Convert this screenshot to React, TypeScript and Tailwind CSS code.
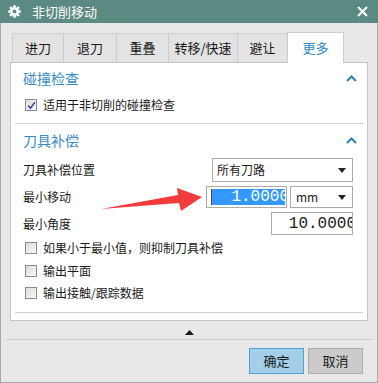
import React from "react";

function Checkbox({ checked }: { checked?: boolean }) {
  return (
    <div className="w-[12px] h-[12px] border border-[#8c8c8c] bg-gradient-to-br from-[#dedede] to-[#f7f7f7] flex items-center justify-center shrink-0">
      {checked && (
        <svg width="9" height="9" viewBox="0 0 9 9">
          <path d="M1.2 4.6 L3.5 7.2 L7.8 1.2" fill="none" stroke="#3b4f8f" strokeWidth="1.6" />
        </svg>
      )}
    </div>
  );
}

function Chevron() {
  return (
    <svg width="11" height="7" viewBox="0 0 11 7">
      <path d="M1 6 L5.5 1.5 L10 6" fill="none" stroke="#2f7fb9" strokeWidth="2" />
    </svg>
  );
}

function Caret() {
  return (
    <svg width="8" height="5" viewBox="0 0 8 5">
      <path d="M0 0 L8 0 L4 5 Z" fill="#222" />
    </svg>
  );
}

function CbRow({ label, checked }: { label: string; checked?: boolean }) {
  return (
    <div className="h-[22px] flex items-center pl-[14px] gap-[6px]">
      <Checkbox checked={checked} />
      <span className="text-[12px] text-[#1a1a1a] leading-none">{label}</span>
    </div>
  );
}

export default function App() {
  const tabs = [
    { t: "进刀", w: "w-[51px]" },
    { t: "退刀", w: "w-[53px]" },
    { t: "重叠", w: "w-[52px]" },
    { t: "转移/快速", w: "w-[69px]" },
    { t: "避让", w: "w-[50px]" },
  ];
  return (
    <div className="relative w-[378px] h-[383px] font-['Noto_Sans_CJK_SC',sans-serif] bg-[#e8e8e8] overflow-hidden select-none">
      {/* Title bar */}
      <div className="h-[23px] bg-[#5a8a82] flex items-center pl-[8px] pr-[10px]">
        <svg width="13" height="13" viewBox="0 0 13 13">
          <g fill="#ffffff">
            <circle cx="6.5" cy="6.5" r="4.3" />
            {[0, 45, 90, 135].map((a) => (
              <rect key={a} x="5.2" y="0.3" width="2.6" height="12.4" transform={`rotate(${a} 6.5 6.5)`} />
            ))}
          </g>
          <circle cx="6.5" cy="6.5" r="1.9" fill="#5a8a82" />
        </svg>
        <span className="ml-[11px] text-[13px] text-white leading-none">非切削移动</span>
        <div className="flex-1" />
        <svg width="11" height="11" viewBox="0 0 11 11">
          <path d="M1 1 L10 10 M10 1 L1 10" stroke="#ffffff" strokeWidth="2" />
        </svg>
      </div>

      {/* Body */}
      <div className="h-[360px] border-x border-b border-[#a9a9a9] flex flex-col">
        {/* Tabs */}
        <div className="h-[39px] flex items-end pl-[11px]">
          {tabs.map((tb) => (
            <div
              key={tb.t}
              className={`${tb.w} h-[29px] border-l border-t border-[#cdcdcd] bg-[#e3e3e3] flex items-center justify-center text-[13px] text-[#1a1a1a]`}
            >
              {tb.t}
            </div>
          ))}
          <div className="w-[57px] h-[31px] -mb-px relative z-10 border-l border-t border-r border-[#cdcdcd] bg-white flex items-center justify-center text-[13px] text-[#2d87c4]">
            更多
          </div>
        </div>

        {/* Panel */}
        <div className="mx-[9px] h-[259px] border border-[#c4c4c4] bg-white flex flex-col">
          {/* Section 1 */}
          <div className="mt-[3px] h-[24px] flex items-center justify-between pl-[12px] pr-[10px]">
            <span className="text-[14px] text-[#3a8cc6] leading-none">碰撞检查</span>
            <Chevron />
          </div>
          <div className="mt-[4px]">
            <CbRow label="适用于非切削的碰撞检查" checked />
          </div>
          <div className="mt-[7px] mx-[4px] h-px bg-[#cfcfcf]" />

          {/* Section 2 */}
          <div className="mt-[4px] h-[24px] flex items-center justify-between pl-[12px] pr-[10px]">
            <span className="text-[14px] text-[#3a8cc6] leading-none">刀具补偿</span>
            <Chevron />
          </div>

          <div className="mt-[6px] h-[24px] flex items-center justify-between pl-[12px] pr-[14px]">
            <span className="text-[12px] text-[#1a1a1a] leading-none">刀具补偿位置</span>
            <div className="w-[141px] h-[24px] border border-[#ababab] bg-white flex items-center justify-between pl-[4px] pr-[6px]">
              <span className="text-[12px] text-[#1a1a1a] leading-none">所有刀路</span>
              <Caret />
            </div>
          </div>

          <div className="mt-[4px] h-[22px] flex items-center justify-between pl-[12px] pr-[14px]">
            <span className="text-[12px] text-[#1a1a1a] leading-none">最小移动</span>
            <div className="flex items-center gap-[3px]">
              <div className="w-[81px] h-[22px] border border-[#ababab] bg-white flex items-center pl-[4px] pr-[1px]">
                <div className="flex-1 h-[16px] bg-[#3399ff] flex items-center justify-end overflow-hidden relative">
                  <div className="absolute left-0 top-0 w-px h-[16px] bg-[#6b4a2a]" />
                  <span className="font-['Liberation_Mono',monospace] text-[16px] text-white leading-none -mr-[4px]">1.0000</span>
                </div>
              </div>
              <div className="w-[63px] h-[22px] border border-[#ababab] bg-white flex items-center justify-between pl-[5px] pr-[6px]">
                <span className="text-[12px] text-[#1a1a1a] leading-none">mm</span>
                <Caret />
              </div>
            </div>
          </div>

          <div className="mt-[4px] h-[23px] flex items-center justify-between pl-[12px] pr-[14px]">
            <span className="text-[12px] text-[#1a1a1a] leading-none">最小角度</span>
            <div className="w-[82px] h-[23px] border border-[#ababab] bg-white flex items-center justify-end overflow-hidden">
              <span className="font-['Liberation_Mono',monospace] text-[16px] text-[#1a1a1a] leading-none -mr-[4px]">10.0000</span>
            </div>
          </div>

          <div className="mt-[2px]">
            <CbRow label="如果小于最小值，则抑制刀具补偿" />
          </div>
          <div className="mt-[1px]">
            <CbRow label="输出平面" />
          </div>
          <CbRow label="输出接触/跟踪数据" />
          <div className="mt-[8px] mx-[4px] h-px bg-[#cfcfcf]" />
        </div>

        {/* Bottom */}
        <div className="mt-[9px] flex justify-center">
          <svg width="9" height="5" viewBox="0 0 9 5">
            <path d="M0 5 L4.5 0 L9 5 Z" fill="#1a1a1a" />
          </svg>
        </div>
        <div className="mt-[4px] mx-[5px] h-px bg-[#cccccc]" />
        <div className="mt-[8px] flex justify-end gap-[4px] pr-[14px]">
          <div className="w-[55px] h-[26px] border border-[#4aa2d9] bg-[#a3cfe9] flex items-center justify-center text-[13px] text-[#1a1a1a]">
            确定
          </div>
          <div className="w-[55px] h-[26px] border border-[#adadad] bg-[#cbcbcb] flex items-center justify-center text-[13px] text-[#1a1a1a]">
            取消
          </div>
        </div>
      </div>

      {/* Red annotation arrow */}
      <svg className="absolute left-0 top-0 pointer-events-none" width="378" height="383" viewBox="0 0 378 383">
        <polygon points="101,209 178,195 177,188 202,197 181,211 179,203" fill="#f23b3b" />
      </svg>
    </div>
  );
}
